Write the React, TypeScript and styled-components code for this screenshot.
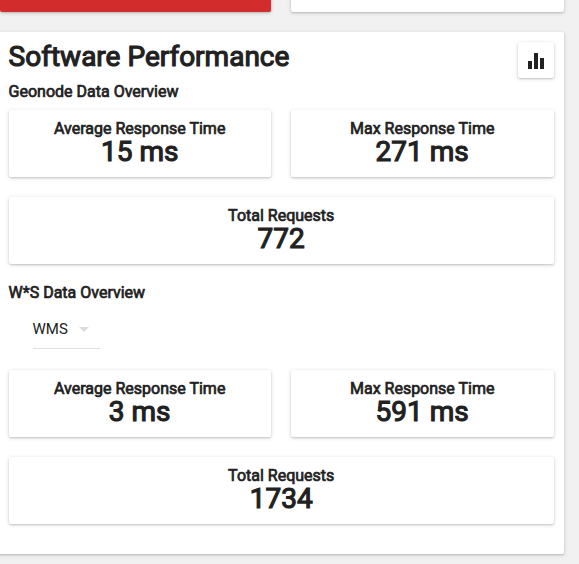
import React from "react";
import styled, { createGlobalStyle } from "styled-components";

const Global = createGlobalStyle`
  * { box-sizing: border-box; }
  html, body { margin: 0; background: #f1f1f1; overflow: hidden; }
  body { font-family: Roboto, sans-serif; color: #212121; }
`;
const shadow = "0 1px 4px rgba(0,0,0,0.15), 0 1px 2px rgba(0,0,0,0.14)";

const Page = styled.main`
  width: 579px;
  height: 564px;
  overflow: hidden;
`;
const Paper = styled.div`
  background: #fff;
  border-radius: 2px;
  box-shadow: ${shadow};
`;
const TopRow = styled.div`
  display: grid;
  grid-template-columns: 271px 273px;
  gap: 20px;
  height: 12px;
`;
const TopCard = styled(Paper)<{ $alert?: boolean }>`
  height: 32px;
  margin-top: -20px;
  background: ${(p) => (p.$alert ? "#d32c2c" : "#fff")};
`;
const Panel = styled(Paper)`
  width: 574px;
  height: 522px;
  margin: 20px 0 0 -10px;
  padding: 10px 10px 0 19px;
`;
const Header = styled.header`
  display: flex;
  justify-content: space-between;
  height: 36px;
`;
const Title = styled.h3`
  margin: 0 0 0 -0.4px;
  padding-top: 1px;
  font-size: 28px;
  line-height: 28px;
  font-weight: 400;
  -webkit-text-stroke: 1.15px currentColor;
`;
const ChartButton = styled.button`
  display: grid;
  place-items: center;
  width: 36px;
  height: 36px;
  padding: 2px 0 0;
  border: 0;
  background: #fff;
  border-radius: 2px;
  box-shadow: ${shadow};
`;
const SectionTitle = styled.h4`
  margin: 0 0 0 -0.4px;
  padding-top: 4px;
  height: 32px;
  font-size: 16px;
  line-height: 19px;
  font-weight: 400;
  -webkit-text-stroke: 0.7px currentColor;
`;
const Stats = styled.div`
  display: grid;
  grid-template-columns: 262px 263px;
  gap: 20px;
`;
const Stat = styled(Paper)<{ $wide?: boolean }>`
  height: 67px;
  padding: 9px 0.6px 0 0;
  text-align: center;
  grid-column: ${(p) => (p.$wide ? "1 / -1" : "auto")};
`;
const Label = styled.div`
  font-size: 16px;
  line-height: 19px;
  -webkit-text-stroke: 0.7px currentColor;
`;
const Value = styled.div`
  font-size: 28px;
  line-height: 28px;
  -webkit-text-stroke: 1.15px currentColor;
`;
const ServiceSection = styled.section`
  padding-top: 15px;
`;
const Select = styled.div`
  display: flex;
  align-items: center;
  justify-content: space-between;
  width: 67px;
  height: 38px;
  margin: 0 0 21px 24px;
  padding: 0 11px 2px 0;
  border-bottom: 1px solid #e0e0e0;
  font-size: 15px;
`;
const Service = styled.span`
  margin-left: -0.5px;
`;
const Arrow = styled.svg`
  margin-top: 2px;
`;

function StatsGroup({ average, max, total }: { average: string; max: string; total: string }) {
  return (
    <Stats>
      <Stat><Label>Average Response Time</Label><Value>{average}</Value></Stat>
      <Stat><Label>Max Response Time</Label><Value>{max}</Value></Stat>
      <Stat $wide><Label>Total Requests</Label><Value>{total}</Value></Stat>
    </Stats>
  );
}

export default function App() {
  return (
    <Page>
      <Global />
      <TopRow><TopCard $alert /><TopCard /></TopRow>
      <Panel>
        <Header>
          <Title>Software Performance</Title>
          <ChartButton aria-label="Show charts">
            <svg width="24" height="24" viewBox="0 0 24 24" fill="#212121">
              <path d="M10 20h4V4h-4v16zm-6 0h4v-8H4v8zM16 9v11h4V9h-4z" />
            </svg>
          </ChartButton>
        </Header>
        <SectionTitle>Geonode Data Overview</SectionTitle>
        <StatsGroup average="15 ms" max="271 ms" total="772" />
        <ServiceSection>
          <SectionTitle>W*S Data Overview</SectionTitle>
          <Select>
            <Service>WMS</Service>
            <Arrow width="10" height="5" viewBox="0 0 10 5" fill="#dcdcdc"><path d="M0 0l5 5 5-5z" /></Arrow>
          </Select>
          <StatsGroup average="3 ms" max="591 ms" total="1734" />
        </ServiceSection>
      </Panel>
    </Page>
  );
}
